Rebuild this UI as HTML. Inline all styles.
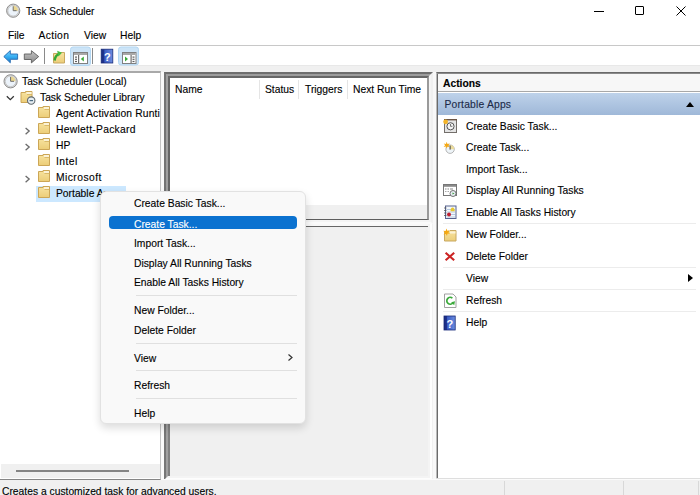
<!DOCTYPE html>
<html><head><meta charset="utf-8">
<style>
*{box-sizing:border-box}
html,body{margin:0;padding:0}
body{width:700px;height:495px;overflow:hidden;position:relative;background:#f0f0f0;font-family:"Liberation Sans",sans-serif;color:#000}
.a{position:absolute}
.t{position:absolute;font-size:10.3px;line-height:13px;white-space:nowrap;-webkit-text-stroke:0.12px currentColor}
</style></head><body>

<!-- title / menu / toolbar white band -->
<div class="a" style="left:0;top:0;width:700px;height:65px;background:#fff"></div>
<div class="a" style="left:0;top:45px;width:700px;height:1px;background:#c8c8c8"></div>
<div class="a" style="left:0;top:65px;width:700px;height:1px;background:#e8e8e8"></div>

<!-- title -->
<div class="t" style="left:26px;top:5px;font-size:10px">Task Scheduler</div>
<!-- window controls -->
<div class="a" style="left:594px;top:11px;width:10px;height:1px;background:#000"></div>
<div class="a" style="left:635px;top:6px;width:9px;height:9px;border:1px solid #000;border-radius:1px"></div>
<svg class="a" style="left:676px;top:6px" width="10" height="10" viewBox="0 0 10 10"><path d="M0.5 0.5L9.5 9.5M9.5 0.5L0.5 9.5" stroke="#000" stroke-width="1"/></svg>

<!-- menu -->
<div class="t" style="left:8px;top:28.5px">File</div>
<div class="t" style="left:38.5px;top:28.5px;letter-spacing:0.35px">Action</div>
<div class="t" style="left:84px;top:28.5px">View</div>
<div class="t" style="left:120px;top:28.5px">Help</div>

<!-- left tree pane -->
<div class="a" style="left:0;top:71px;width:161px;height:409px;background:#fff;border-top:2px solid #a9a9a9;border-right:1px solid #c4c4c4;border-bottom:1px solid #868686"></div>
<div class="a" style="left:1px;top:464px;width:159px;height:14px;background:#f0f0f0"></div>
<div class="a" style="left:16px;top:470px;width:113px;height:2px;background:#858585"></div>

<div class="t" style="left:22px;top:75px">Task Scheduler (Local)</div>
<div class="t" style="left:40px;top:91px">Task Scheduler Library</div>
<div class="a" style="left:0;top:0;width:160px;height:495px;overflow:hidden">
<div class="t" style="left:56px;top:107px;letter-spacing:0.15px">Agent Activation Runtime</div>
</div>
<div class="t" style="left:56px;top:123px;letter-spacing:0.28px">Hewlett-Packard</div>
<div class="t" style="left:56px;top:139px">HP</div>
<div class="t" style="left:56px;top:155px;letter-spacing:0.45px">Intel</div>
<div class="t" style="left:56px;top:171px;letter-spacing:0.45px">Microsoft</div>
<div class="a" style="left:36px;top:186px;width:90px;height:16px;background:#cce8ff"></div>
<div class="t" style="left:56px;top:187px">Portable Apps</div>

<!-- splitter -->
<div class="a" style="left:161px;top:72px;width:3px;height:407px;background:#fafafa"></div>

<!-- center upper list -->
<div class="a" style="left:164px;top:72px;width:269px;height:152px;border-left:2px solid #747474;border-top:2px solid #6e6e6e;border-right:2px solid #f0f0f0;border-bottom:2px solid #fafafa">
 <div style="width:100%;height:100%;border-left:2px solid #a0a0a0;border-top:2px solid #9c9c9c;border-right:2px solid #f4f4f4;border-bottom:2px solid #f4f4f4;box-shadow:inset -1px 0 0 #fff">
  <div style="position:relative;width:100%;height:100%;background:#fff;border-left:2px solid #666;border-top:2px solid #666;border-right:2px solid #9a9a9a;border-bottom:1px solid #5e5e5e">
   <div class="a" style="left:0;top:127px;width:257px;height:14px;background:#f0f0f0"></div>
  </div>
 </div>
</div>
<!-- column headers -->
<div class="a" style="left:259px;top:80px;width:1px;height:19px;background:#e5e5e5"></div>
<div class="a" style="left:298px;top:80px;width:1px;height:19px;background:#e5e5e5"></div>
<div class="a" style="left:347px;top:80px;width:1px;height:19px;background:#e5e5e5"></div>
<div class="t" style="left:175px;top:82.5px">Name</div>
<div class="t" style="left:265px;top:82.5px">Status</div>
<div class="t" style="left:305px;top:82.5px">Triggers</div>
<div class="t" style="left:353px;top:82.5px">Next Run Time</div>

<!-- center lower panel -->
<div class="a" style="left:164px;top:224px;width:268px;height:256px;border-left:2px solid #767676;border-right:2px solid #fdfdfd;border-bottom:2px solid #fdfdfd">
 <div style="width:100%;height:100%;border-left:2px solid #a0a0a0;border-right:2px solid #f4f4f4;border-bottom:2px solid #f4f4f4">
  <div style="width:100%;height:100%;background:#f0f0f0;border-left:2px solid #808080;border-top:2px solid #f8f8f8">
  </div>
 </div>
</div>
<div class="a" style="left:170px;top:226px;width:258px;height:1px;background:#666"></div>
<div class="a" style="left:433px;top:72px;width:3px;height:407px;background:#f8f8f8"></div>
<!-- actions pane -->
<div class="a" style="left:436px;top:72px;width:264px;height:406px;background:#fff;border-left:1px solid #b8b8b8;border-top:1px solid #6a6a6a"></div>
<div class="a" style="left:437px;top:72px;width:1px;height:406px;background:#6a6a6a"></div>
<div class="a" style="left:437px;top:73px;width:263px;height:1px;background:#8a8a8a"></div>
<div class="a" style="left:438px;top:74px;width:262px;height:17px;background:#f7f7f7"></div>
<div class="a" style="left:438px;top:91px;width:262px;height:1px;background:#a8a8a8"></div>
<div class="a" style="left:438px;top:93px;width:262px;height:22px;background:linear-gradient(#bed2ea,#9fb8d8)"></div>
<div class="t" style="left:443px;top:77px;font-weight:bold">Actions</div>
<div class="t" style="left:444.5px;top:98px;color:#1c2a48;letter-spacing:0.2px">Portable Apps</div>
<svg class="a" style="left:686px;top:102px" width="8" height="5"><path d="M0 5L4 0L8 5Z" fill="#000"/></svg>

<div class="t" style="left:466px;top:120px">Create Basic Task...</div>
<div class="t" style="left:466px;top:141px">Create Task...</div>
<div class="t" style="left:466px;top:163px">Import Task...</div>
<div class="t" style="left:466px;top:184px">Display All Running Tasks</div>
<div class="t" style="left:466px;top:206px">Enable All Tasks History</div>
<div class="a" style="left:443px;top:223px;width:253px;height:1px;background:#ececec"></div>
<div class="t" style="left:466px;top:228px">New Folder...</div>
<div class="t" style="left:466px;top:250px">Delete Folder</div>
<div class="a" style="left:443px;top:267px;width:253px;height:1px;background:#ececec"></div>
<div class="t" style="left:466px;top:272px">View</div>
<svg class="a" style="left:688px;top:274px" width="5" height="8"><path d="M0 0L5 4L0 8Z" fill="#000"/></svg>
<div class="a" style="left:443px;top:289px;width:253px;height:1px;background:#ececec"></div>
<div class="t" style="left:466px;top:294px">Refresh</div>
<div class="a" style="left:443px;top:311px;width:253px;height:1px;background:#ececec"></div>
<div class="t" style="left:466px;top:316px">Help</div>

<!-- status bar -->
<div class="a" style="left:436px;top:478px;width:264px;height:1px;background:#dedede"></div>
<div class="a" style="left:161px;top:479px;width:539px;height:1px;background:#fbfbfb"></div>
<div class="a" style="left:504px;top:481px;width:1px;height:14px;background:#d8d8d8"></div>
<div class="a" style="left:623px;top:481px;width:1px;height:14px;background:#d8d8d8"></div>
<div class="a" style="left:698px;top:481px;width:1px;height:14px;background:#d8d8d8"></div>
<div class="t" style="left:2px;top:485px">Creates a customized task for advanced users.</div>

<!-- icons -->
<svg class="a" style="left:0;top:0" width="700" height="495" viewBox="0 0 700 495">
<defs>
<linearGradient id="gb" x1="0" y1="0" x2="0" y2="1"><stop offset="0" stop-color="#7cd4ff"/><stop offset="0.5" stop-color="#36aef2"/><stop offset="1" stop-color="#1a78c8"/></linearGradient>
<linearGradient id="gg" x1="0" y1="0" x2="0" y2="1"><stop offset="0" stop-color="#c4c4c4"/><stop offset="1" stop-color="#8c8c8c"/></linearGradient>
<linearGradient id="gf" x1="0" y1="0" x2="0" y2="1"><stop offset="0" stop-color="#f7e3a0"/><stop offset="1" stop-color="#eccd78"/></linearGradient>
<linearGradient id="gh" x1="0" y1="0" x2="1" y2="0"><stop offset="0" stop-color="#1a2a7e"/><stop offset="0.25" stop-color="#1e3490"/><stop offset="0.3" stop-color="#3a5cc4"/><stop offset="1" stop-color="#6d8ee0"/></linearGradient>
<g id="clk">
 <circle r="6.6" fill="#dcdcdc" stroke="#8e8e8e" stroke-width="1"/>
 <circle r="5.3" fill="#ecf3fa" stroke="#b4b4b4" stroke-width="0.6"/>
 <path d="M0 0V-4.9A4.9 4.9 0 0 1 4.9 0Z" fill="#ead690"/>
 <path d="M0 -4.4V0H3.4" stroke="#6e6e6e" stroke-width="1" fill="none"/>
</g>
<g id="fld">
 <path d="M0.5 1.5H5V0.5H11.5V11.5H0.5Z" fill="url(#gf)" stroke="#cca656" stroke-width="1"/>
 <rect x="6" y="1" width="5" height="2" fill="#fbf2d6"/>
 <path d="M6.5 3.5H11.5" stroke="#d2b060" stroke-width="0.8"/>
</g>
<g id="chev"><path d="M0.6 0.6L4.2 3.8L0.6 7" stroke="#6b6b6b" stroke-width="1.3" fill="none"/></g>
</defs>

<!-- title clock -->
<use href="#clk" x="13.2" y="10.7"/>

<!-- toolbar -->
<path d="M3.8 56.6L10.3 50.6V54H17.6V59.3H10.3V62.8Z" fill="url(#gb)" stroke="#2468b0" stroke-width="0.9" stroke-linejoin="round"/>
<path d="M38.7 56.6L31.4 50.7V54H24.3V59.5H31.4V62.9Z" fill="url(#gg)" stroke="#5e5e5e" stroke-width="0.9" stroke-linejoin="round"/>
<rect x="44" y="48" width="1" height="16" fill="#8a8a8a"/>
<path d="M53.5 53.5H58L59 52.5H64.5V63H53.5Z" fill="url(#gf)" stroke="#c8a860" stroke-width="1"/>
<path d="M54.6 60.5C55 57 56.5 54.8 59.2 53.8" stroke="#34a834" stroke-width="2.4" fill="none"/>
<path d="M57.2 50.8L62 52.8L58.4 56.4Z" fill="#44bc44"/>
<rect x="70.5" y="47" width="20" height="18.5" rx="2.5" fill="#cce4f7" stroke="#b3d7f3" stroke-width="1"/>
<g>
 <rect x="73.5" y="52.5" width="14" height="11" fill="#fff" stroke="#808080" stroke-width="1"/>
 <rect x="74" y="53" width="13" height="2" fill="#a8a8a8"/>
 <rect x="78" y="55" width="1.2" height="8" fill="#707070"/>
 <rect x="75" y="56.5" width="2" height="1.2" fill="#606060"/><rect x="75" y="58.7" width="2" height="1.2" fill="#606060"/><rect x="75" y="60.9" width="2" height="1.2" fill="#606060"/>
 <path d="M80.8 59L83.8 56.5V61.5Z" fill="#3aaa3a"/>
</g>
<rect x="92" y="48" width="1" height="16" fill="#8a8a8a"/>
<rect x="101.2" y="49.2" width="11.6" height="13.8" fill="url(#gh)"/>
<rect x="101.2" y="49.2" width="11.6" height="13.8" fill="none" stroke="#182a78" stroke-width="0.8"/>
<text x="107.3" y="61" font-family="Liberation Sans" font-size="11" font-weight="bold" fill="#fff" text-anchor="middle">?</text>
<rect x="118.5" y="47" width="20" height="18" rx="2.5" fill="#cce4f7" stroke="#b3d7f3" stroke-width="1"/>
<g>
 <rect x="122.5" y="52.5" width="13.5" height="11" fill="#fff" stroke="#808080" stroke-width="1"/>
 <rect x="123" y="53" width="12.5" height="2" fill="#a8a8a8"/>
 <rect x="130.5" y="55" width="1.2" height="8" fill="#707070"/>
 <rect x="132.5" y="56.5" width="2" height="1.2" fill="#606060"/><rect x="132.5" y="58.7" width="2" height="1.2" fill="#606060"/><rect x="132.5" y="60.9" width="2" height="1.2" fill="#606060"/>
 <path d="M128 59L125 56.5V61.5Z" fill="#3aaa3a"/>
</g>

<!-- tree -->
<use href="#clk" x="10.6" y="81.3"/>
<path d="M6.8 96.3L10.3 99.7L13.8 96.3" stroke="#333" stroke-width="1.3" fill="none"/>
<use href="#fld" x="20.5" y="91"/>
<circle cx="31.2" cy="100.6" r="3.7" fill="#e6edf2" stroke="#626a70" stroke-width="1.1"/>
<path d="M29.6 100.6H33" stroke="#4a6a80" stroke-width="1.2" fill="none"/>
<use href="#fld" x="38" y="106"/>
<use href="#fld" x="38" y="122"/>
<use href="#fld" x="38" y="138"/>
<use href="#fld" x="38" y="154"/>
<use href="#fld" x="38" y="170"/>
<use href="#fld" x="38" y="186"/>
<use href="#chev" x="25" y="127.3"/>
<use href="#chev" x="25" y="143.3"/>
<use href="#chev" x="25" y="175.3"/>

<!-- actions icons -->
<g>
 <rect x="444.5" y="119.5" width="12" height="13" fill="#e4e4e4" stroke="#7a6e64" stroke-width="1"/>
 <circle cx="450.5" cy="126.3" r="3.6" fill="#f4f4f4" stroke="#555" stroke-width="1"/>
 <path d="M450.5 124V126.3H452.4" stroke="#555" stroke-width="0.8" fill="none"/>
 <path d="M444.5 119.5H456.5V132.5H444.5Z" fill="none" stroke="#6f6f6f" stroke-width="0.6"/><rect x="444" y="119" width="13" height="1.4" fill="#6a5444"/><circle cx="445.6" cy="121.8" r="2.4" fill="#f4b428"/>
</g>
<g>
 <circle cx="450.1" cy="149.2" r="4.2" fill="#eef4f8" stroke="#b4b4b4" stroke-width="1"/>
 <path d="M450.1 149.2V145A4.2 4.2 0 0 1 454.3 149.2Z" fill="#ecdc9c"/>
 <path d="M450.1 145.6V149.6" stroke="#3a3a3a" stroke-width="1" fill="none"/>
 <path d="M446.6 141.8L447.5 144L449.8 143.6L448.4 145.3L449.8 147.2L447.5 146.6L446.6 148.6L445.9 146.5L443.6 146.9L445.1 145.2L443.8 143.4L446 144Z" fill="#f4a814"/>
</g>
<g>
 <rect x="443.5" y="184.5" width="13" height="11" fill="#fff" stroke="#777" stroke-width="1"/>
 <rect x="444" y="185" width="12" height="1.8" fill="#8a8a8a"/>
 <rect x="445" y="188.5" width="1.5" height="1" fill="#888"/><rect x="447.5" y="188.5" width="1.5" height="1" fill="#888"/><rect x="450" y="188.5" width="3" height="1" fill="#888"/>
 <rect x="445" y="191" width="1.5" height="1" fill="#aaa"/><rect x="447.5" y="191" width="1.5" height="1" fill="#aaa"/>
 <circle cx="453" cy="193.5" r="3" fill="#e8eef4" stroke="#666" stroke-width="0.9"/>
 <path d="M452.5 192.5L454.5 193.5L452.5 194.5Z" fill="#3a9a3a"/>
</g>
<g>
 <rect x="445.5" y="206" width="10.5" height="12.5" fill="#f4f8fc" stroke="#56628e" stroke-width="1"/>
 <path d="M446.5 209.5H455M446.5 212H455M446.5 214.5H455M446.5 217H455" stroke="#9bb4d4" stroke-width="0.7"/>
 <path d="M444 208H446.5M444 210.5H446.5M444 213H446.5M444 215.5H446.5" stroke="#555" stroke-width="0.8"/>
 <path d="M450.5 211.3C450.5 208.5 451.3 207.4 452.6 207.4C453.9 207.4 454.7 208.5 454.7 211.3Z" fill="#e8c830"/>
 <circle cx="449" cy="214.6" r="2" fill="#c02030"/>
</g>
<g>
 <path d="M444.5 231.5H449L450 230.5H456V241H444.5Z" fill="url(#gf)" stroke="#c8a860" stroke-width="1"/>
 <path d="M446.5 228.6L447.3 230.8L449.6 230.2L448.2 232.1L449.9 233.8L447.5 233.6L447 236L445.9 233.9L443.6 234.6L444.9 232.5L443.2 230.8L445.6 230.9Z" fill="#f5a810"/><rect x="450" y="231.5" width="5.5" height="2" fill="#fbf2d6"/>
</g>
<path d="M445.6 252.8L454.2 260.3M454.2 252.8L445.6 260.3" stroke="#cc2424" stroke-width="2.1"/>
<g>
 <path d="M444.5 294H453L456 297V307.5H444.5Z" fill="#fff" stroke="#a0a0a0" stroke-width="1"/>
 <path d="M452.4 298.2A3.4 3.4 0 1 0 452.8 303" stroke="#3aaa3a" stroke-width="1.7" fill="none"/>
 <path d="M451.2 302.2L455 301.2L454.2 305.2Z" fill="#3aaa3a"/>
</g>
<rect x="444" y="316" width="11.2" height="14" fill="url(#gh)" stroke="#182a78" stroke-width="0.8"/>
<text x="449.8" y="327.8" font-family="Liberation Sans" font-size="11" font-weight="bold" fill="#fff" text-anchor="middle">?</text>
</svg>

<!-- context menu -->
<div class="a" style="left:100px;top:191px;width:206px;height:233px;background:#f9f9f9;border:1px solid #e2e2e2;border-radius:6px;box-shadow:0 4px 9px rgba(0,0,0,0.14)"></div>
<div class="a" style="left:109px;top:216px;width:188px;height:13px;background:#0b72d0;border-radius:4px"></div>
<div class="t" style="left:134px;top:196.5px">Create Basic Task...</div>
<div class="t" style="left:134px;top:217.5px;color:#fff">Create Task...</div>
<div class="t" style="left:134px;top:236.5px">Import Task...</div>
<div class="t" style="left:134px;top:256.5px">Display All Running Tasks</div>
<div class="t" style="left:134px;top:275.5px">Enable All Tasks History</div>
<div class="a" style="left:136px;top:295px;width:161px;height:1px;background:#e0e0e0"></div>
<div class="t" style="left:134px;top:303.5px">New Folder...</div>
<div class="t" style="left:134px;top:323.5px">Delete Folder</div>
<div class="a" style="left:136px;top:343px;width:161px;height:1px;background:#e0e0e0"></div>
<div class="t" style="left:134px;top:351.5px">View</div>
<svg class="a" style="left:288px;top:354px" width="5" height="7"><path d="M0.5 0.5L4 3.5L0.5 6.5" stroke="#333" fill="none" stroke-width="1.2"/></svg>
<div class="a" style="left:136px;top:370px;width:161px;height:1px;background:#e0e0e0"></div>
<div class="t" style="left:134px;top:378.5px">Refresh</div>
<div class="a" style="left:136px;top:398px;width:161px;height:1px;background:#e0e0e0"></div>
<div class="t" style="left:134px;top:406.5px">Help</div>

</body></html>
